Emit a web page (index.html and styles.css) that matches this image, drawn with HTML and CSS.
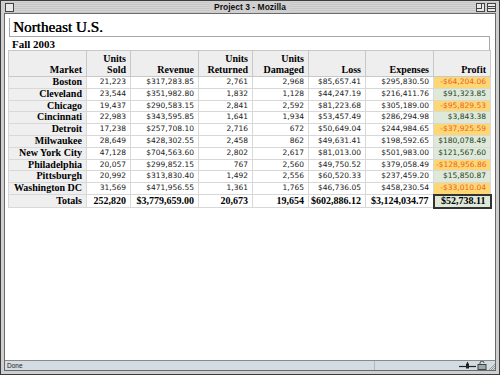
FILE: index.html
```html
<!DOCTYPE html>
<html>
<head>
<meta charset="utf-8">
<title>Project 3</title>
<link rel="stylesheet" href="styles.css">
</head>
<body>
<div class="window">
  <div class="titlebar">
    <span class="closebox"></span>
    <span class="title">Project 3 - Mozilla</span>
    <span class="boxes"><span class="zoombox"></span><span class="shadebox"></span></span>
  </div>
  <div class="pane">
    <div class="content">
      <h1>Northeast U.S.</h1>
      <h2>Fall 2003</h2>
      <table class="report">
        <colgroup>
          <col class="c-market"><col class="c-sold"><col class="c-rev"><col class="c-ret">
          <col class="c-dam"><col class="c-loss"><col class="c-exp"><col class="c-profit">
        </colgroup>
        <thead>
          <tr>
            <th>Market</th><th>Units<br>Sold</th><th>Revenue</th><th>Units<br>Returned</th>
            <th>Units<br>Damaged</th><th>Loss</th><th>Expenses</th><th>Profit</th>
          </tr>
        </thead>
        <tbody>
          <tr><th>Boston</th><td>21,223</td><td>$317,283.85</td><td>2,761</td><td>2,968</td><td>$85,657.41</td><td>$295,830.50</td><td class="neg">-$64,204.06</td></tr>
          <tr><th>Cleveland</th><td>23,544</td><td>$351,982.80</td><td>1,832</td><td>1,128</td><td>$44,247.19</td><td>$216,411.76</td><td class="pos">$91,323.85</td></tr>
          <tr><th>Chicago</th><td>19,437</td><td>$290,583.15</td><td>2,841</td><td>2,592</td><td>$81,223.68</td><td>$305,189.00</td><td class="neg">-$95,829.53</td></tr>
          <tr><th>Cincinnati</th><td>22,983</td><td>$343,595.85</td><td>1,641</td><td>1,934</td><td>$53,457.49</td><td>$286,294.98</td><td class="pos">$3,843.38</td></tr>
          <tr><th>Detroit</th><td>17,238</td><td>$257,708.10</td><td>2,716</td><td>672</td><td>$50,649.04</td><td>$244,984.65</td><td class="neg">-$37,925.59</td></tr>
          <tr><th>Milwaukee</th><td>28,649</td><td>$428,302.55</td><td>2,458</td><td>862</td><td>$49,631.41</td><td>$198,592.65</td><td class="pos">$180,078.49</td></tr>
          <tr><th>New York City</th><td>47,128</td><td>$704,563.60</td><td>2,802</td><td>2,617</td><td>$81,013.00</td><td>$501,983.00</td><td class="pos">$121,567.60</td></tr>
          <tr><th>Philadelphia</th><td>20,057</td><td>$299,852.15</td><td>767</td><td>2,560</td><td>$49,750.52</td><td>$379,058.49</td><td class="neg">-$128,956.86</td></tr>
          <tr><th>Pittsburgh</th><td>20,992</td><td>$313,830.40</td><td>1,492</td><td>2,556</td><td>$60,520.33</td><td>$237,459.20</td><td class="pos">$15,850.87</td></tr>
          <tr><th>Washington DC</th><td>31,569</td><td>$471,956.55</td><td>1,361</td><td>1,765</td><td>$46,736.05</td><td>$458,230.54</td><td class="neg">-$33,010.04</td></tr>
        </tbody>
        <tfoot>
          <tr><th>Totals</th><td>252,820</td><td>$3,779,659.00</td><td>20,673</td><td>19,654</td><td>$602,886.12</td><td>$3,124,034.77</td><td class="total-profit">$52,738.11</td></tr>
        </tfoot>
      </table>
    </div>
    <div class="statusbar">
      <span class="status-text">Done</span>
      <span class="status-div"></span>
      <span class="status-icons">
        <svg class="ico-online" width="17" height="8" viewBox="0 0 17 8"><path d="M0 4.5h17" stroke="#222" stroke-width="1.2"/><path d="M7 1.5h3v5H7z" fill="#222"/><path d="M8.5 0v2" stroke="#222"/></svg>
        <svg class="ico-lock" width="10" height="9" viewBox="0 0 10 9"><rect x="1" y="3.5" width="8" height="5" fill="#9aa" stroke="#444" stroke-width="1"/><path d="M3 3.5V2a2 2 0 0 1 4 0" fill="none" stroke="#444"/></svg>
        <svg class="ico-grip" width="7" height="8" viewBox="0 0 7 8"><path d="M1 8L7 2M3 8L7 4M5 8L7 6" stroke="#888" stroke-width="0.8"/></svg>
      </span>
    </div>
  </div>
</div>
</body>
</html>
```
FILE: styles.css
```css
html, body {
  margin: 0;
  padding: 0;
  background: #fff;
}

.window {
  width: 500px;
  height: 375px;
  box-sizing: border-box;
  border: 1px solid #3c3c3c;
  background: #cfcfcf;
  padding: 0 3px 3px 3px;
  display: flex;
  flex-direction: column;
}

.titlebar {
  height: 12px;
  flex: none;
  position: relative;
  display: flex;
  align-items: center;
  justify-content: center;
  background: repeating-linear-gradient(to bottom, #d6d6d6 0, #d6d6d6 1px, #c6c6c6 1px, #c6c6c6 2px);
}

.closebox {
  position: absolute;
  left: 1px;
  top: 2px;
  width: 7px;
  height: 7px;
  border: 1px solid #444;
  background: #e8e8e8;
}

.title {
  font-family: "Liberation Sans", Arial, sans-serif;
  font-weight: bold;
  font-size: 8.5px;
  line-height: 12px;
  color: #111;
  background: #cfcfcf;
  padding: 0 4px;
}

.boxes {
  position: absolute;
  right: 0;
  top: 2px;
  display: flex;
  gap: 2px;
}

.zoombox, .shadebox {
  width: 7px;
  height: 7px;
  border: 1px solid #444;
  background: #e8e8e8;
  position: relative;
}

.zoombox::after {
  content: "";
  position: absolute;
  left: 0;
  top: 0;
  width: 4px;
  height: 4px;
  border-right: 1px solid #444;
  border-bottom: 1px solid #444;
}

.shadebox::after {
  content: "";
  position: absolute;
  left: 0;
  right: 0;
  top: 2px;
  height: 1px;
  border-bottom: 1px solid #444;
  border-top: 1px solid #444;
}

.pane {
  flex: 1;
  display: flex;
  flex-direction: column;
  border: 1px solid #6a6a6a;
  background: #fff;
  min-height: 0;
}

.content {
  flex: 1;
  padding: 4px 4px 0 3px;
  overflow: hidden;
}

h1 {
  margin: 0 0 0 1px;
  width: 481px;
  box-sizing: border-box;
  padding-left: 3px;
  font-family: "Liberation Serif", "Times New Roman", serif;
  font-weight: normal;
  font-size: 15.2px;
  line-height: 18px;
  color: #000;
  border-left: 1px solid #a8a8a8;
  border-bottom: 1px solid #a8a8a8;
  text-shadow: 0.4px 0 0 #000;
}

h2 {
  margin: 0 0 0 1px;
  width: 481px;
  box-sizing: border-box;
  padding: 1px 0 0 3px;
  font-family: "Liberation Serif", "Times New Roman", serif;
  font-weight: bold;
  font-size: 11px;
  line-height: 12px;
  color: #000;
  border-right: 1px solid #a8a8a8;
}

.report {
  width: 482px;
  table-layout: fixed;
  border-collapse: collapse;
  border: 1px solid #9a9a9a;
}

.c-market { width: 78px; }
.c-sold { width: 44px; }
.c-rev { width: 68px; }
.c-ret { width: 54px; }
.c-dam { width: 56px; }
.c-loss { width: 57px; }
.c-exp { width: 68px; }
.c-profit { width: 57px; }

.report th, .report td {
  padding: 0 4px 0 2px;
  text-align: right;
  white-space: nowrap;
  overflow: visible;
  border: 1px solid #d8d8d8;
  height: 10.8px;
  line-height: 10.8px;
}

.report th {
  font-family: "Liberation Serif", "Times New Roman", serif;
  font-weight: bold;
  font-size: 10px;
  color: #000;
  background: #efefef;
}

.report thead th {
  vertical-align: bottom;
  height: 23px;
  line-height: 11px;
  padding-top: 1px;
  padding-bottom: 1px;
  background: #eeeeee;
  border-color: #c8c8c8;
}

.report td {
  font-family: "DejaVu Sans", Verdana, sans-serif;
  font-size: 7.5px;
  color: #1a1a1a;
  background: #fff;
}

.report td.neg {
  background: #fdd872;
  color: #ee5f2c;
}

.report td.pos {
  background: #dfe9da;
  color: #1e3f1e;
}

.report tfoot th, .report tfoot td {
  font-family: "Liberation Serif", "Times New Roman", serif;
  font-weight: bold;
  font-size: 10px;
  color: #000;
}

.report tfoot th {
  background: #efefef;
}

.report td.total-profit {
  background: #dfe9da;
  border: 2px solid #333;
}

.statusbar {
  flex: none;
  height: 9px;
  border-top: 1px solid #8a8a8a;
  background: #d3dbe3;
  display: flex;
  align-items: center;
  font-family: "Liberation Sans", Arial, sans-serif;
  font-size: 6.5px;
  color: #222;
}

.status-text {
  padding-left: 2px;
  flex: 1;
}

.status-div {
  width: 1px;
  height: 9px;
  background: #b0b8c0;
  margin-right: 84px;
}

.status-icons {
  display: flex;
  align-items: center;
  gap: 1px;
}
```
